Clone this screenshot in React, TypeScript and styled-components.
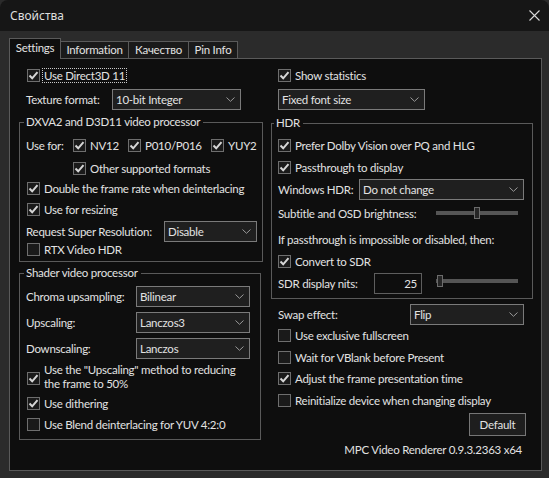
import React from "react";
import styled, { createGlobalStyle } from "styled-components";

const C = {
  text: "#e2e2e2",
  panel: "#0e0e0e",
  body: "#2b2b2b",
  title: "#161616",
  groupBorder: "#5a5a5a",
  ctrlBorder: "#7a7a7a",
  ctrlBg: "#1f1f1f",
};

const Global = createGlobalStyle`
  html, body { margin: 0; padding: 0; background: ${C.body}; overflow: hidden; }
  * { box-sizing: border-box; }
  body {
    font-family: Lato, "Noto Sans", sans-serif;
    font-size: 11.5px;
    letter-spacing: -0.25px;
    color: ${C.text};
  }
`;

const Window = styled.div`
  width: 549px;
  height: 478px;
  display: flex;
  flex-direction: column;
  background: ${C.body};
  border-radius: 8px 8px 0 0;
  overflow: hidden;
`;

const TitleBar = styled.div`
  height: 31px;
  flex: none;
  background: ${C.title};
  display: flex;
  align-items: center;
  justify-content: space-between;
  padding: 0 9px 0 10px;
`;

const TitleText = styled.span`
  font-family: "Noto Sans", sans-serif;
  font-size: 12px;
  letter-spacing: 0;
  color: #dedede;
`;

const Body = styled.div`
  flex: 1;
  display: flex;
  flex-direction: column;
  padding: 7px 8px 0 9px;
`;

const TabStrip = styled.div`
  display: flex;
  align-items: flex-start;
  height: 21px;
  margin-bottom: -1px;
  position: relative;
  z-index: 2;
`;

const Tab = styled.div<{ $w: number; $active?: boolean }>`
  width: ${(p) => p.$w}px;
  height: ${(p) => (p.$active ? 21 : 17)}px;
  margin-top: ${(p) => (p.$active ? 0 : 3)}px;
  margin-left: ${(p) => (p.$active ? 0 : -1)}px;
  border: 1px solid ${C.groupBorder};
  border-bottom: none;
  background: ${(p) => (p.$active ? C.panel : "#1a1a1a")};
  display: flex;
  align-items: center;
  justify-content: center;
  padding-bottom: ${(p) => (p.$active ? 2 : 0)}px;
  line-height: 14px;
  white-space: nowrap;
`;

const Panel = styled.div`
  position: relative;
  z-index: 1;
  width: 533px;
  height: 413px;
  border: 1px solid ${C.groupBorder};
  background: ${C.panel};
  padding: 10px 8px 0 9px;
  display: grid;
  grid-template-columns: 244px 262px;
  column-gap: 8px;
  align-items: start;
`;

const Column = styled.div`
  display: flex;
  flex-direction: column;
`;

const Group = styled.div<{ $w: number; $h: number; $mt: number }>`
  width: ${(p) => p.$w}px;
  height: ${(p) => p.$h}px;
  margin-top: ${(p) => p.$mt}px;
  border: 1px solid ${C.groupBorder};
  padding: 0 6px;
  display: flex;
  flex-direction: column;
`;

const GroupTitle = styled.span<{ $ml: number }>`
  align-self: flex-start;
  margin: -8px 0 0 ${(p) => p.$ml}px;
  padding: 0 3px 0 2px;
  line-height: 14px;
  height: 14px;
  background: ${C.panel};
  white-space: nowrap;
`;

const Row = styled.div<{ $mt?: number; $pl?: number; $h?: number }>`
  display: flex;
  align-items: center;
  margin-top: ${(p) => p.$mt ?? 0}px;
  padding-left: ${(p) => p.$pl ?? 0}px;
  height: ${(p) => p.$h ?? 13}px;
  white-space: nowrap;
`;

const Label = styled.span<{ $w?: number }>`
  ${(p) => (p.$w ? `width: ${p.$w}px; flex: none;` : "")}
  line-height: 13px;
  white-space: nowrap;
`;

const CheckWrap = styled.label<{ $mt?: number; $pl?: number; $w?: number; $top?: boolean }>`
  display: flex;
  align-items: ${(p) => (p.$top ? "flex-start" : "center")};
  gap: 4px;
  margin-top: ${(p) => p.$mt ?? 0}px;
  padding-left: ${(p) => p.$pl ?? 0}px;
  ${(p) => (p.$w ? `width: ${p.$w}px; flex: none;` : "")}
  min-height: 13px;
  white-space: nowrap;
`;

const Box = styled.span<{ $offset?: number }>`
  width: 13px;
  height: 13px;
  flex: none;
  border: 1px solid #6e6e6e;
  background: #1a1a1a;
  display: flex;
  align-items: center;
  justify-content: center;
  margin-top: ${(p) => p.$offset ?? 0}px;
`;

const CheckText = styled.span<{ $focus?: boolean; $lh?: number }>`
  line-height: ${(p) => p.$lh ?? 13}px;
  ${(p) => (p.$focus ? `outline: 1px dotted #c8c8c8; outline-offset: 0; padding: 0 1px; margin-left: -1px;` : "")}
`;

const SelectBox = styled.div<{ $w: number; $ml?: number }>`
  width: ${(p) => p.$w}px;
  height: 21px;
  flex: none;
  margin-left: ${(p) => p.$ml ?? 0}px;
  border: 1px solid ${C.ctrlBorder};
  background: ${C.ctrlBg};
  display: flex;
  align-items: center;
  justify-content: space-between;
  padding: 0 5px 0 3px;
  line-height: 14px;
`;

const Edit = styled.div<{ $w: number }>`
  width: ${(p) => p.$w}px;
  height: 21px;
  flex: none;
  border: 1px solid #5e5e5e;
  background: ${C.panel};
  display: flex;
  align-items: center;
  justify-content: flex-end;
  padding-right: 4px;
`;

const SliderWrap = styled.div<{ $w: number; $mt?: number }>`
  position: relative;
  width: ${(p) => p.$w}px;
  height: 12px;
  flex: none;
  align-self: flex-start;
  margin-top: ${(p) => p.$mt ?? 0}px;
`;

const Track = styled.div`
  margin-top: 4px;
  height: 4px;
  background: #555555;
`;

const Thumb = styled.div`
  position: absolute;
  top: 0;
  width: 6px;
  height: 12px;
  background: #262626;
  border: 1px solid #6c6c6c;
`;

const Spacer = styled.span<{ $w: number }>`
  width: ${(p) => p.$w}px;
  flex: none;
`;

const Button = styled.div`
  align-self: flex-end;
  margin: 6px 7px 0 0;
  width: 57px;
  height: 23px;
  border: 1px solid #767676;
  background: #1e1e1e;
  display: flex;
  align-items: center;
  justify-content: center;
`;

const Version = styled.div`
  margin-top: 7px;
  line-height: 13px;
  text-align: right;
  padding-right: 11px;
  white-space: nowrap;
`;

const Check = () => (
  <svg width="11" height="11" viewBox="0 0 11 11">
    <polyline points="1.5,5.5 4.2,8.3 9.5,2.2" fill="none" stroke="#d6d6d6" strokeWidth="2" />
  </svg>
);

const Chevron = () => (
  <svg width="9" height="5" viewBox="0 0 9 5">
    <polyline points="0.5,0.5 4.5,4.3 8.5,0.5" fill="none" stroke="#9a9a9a" strokeWidth="1" />
  </svg>
);

const CloseIcon = () => (
  <svg width="11" height="11" viewBox="0 0 11 11">
    <path d="M0.5 0.5 L10.5 10.5 M10.5 0.5 L0.5 10.5" stroke="#d8d8d8" strokeWidth="1.1" />
  </svg>
);

type CBProps = {
  label: React.ReactNode;
  checked?: boolean;
  mt?: number;
  pl?: number;
  w?: number;
  focus?: boolean;
  top?: boolean;
  boxOffset?: number;
  lh?: number;
};

const CheckBox = ({ label, checked, mt, pl, w, focus, top, boxOffset, lh }: CBProps) => (
  <CheckWrap $mt={mt} $pl={pl} $w={w} $top={top}>
    <Box $offset={boxOffset}>{checked && <Check />}</Box>
    <CheckText $focus={focus} $lh={lh}>{label}</CheckText>
  </CheckWrap>
);

const Select = ({ value, w, ml }: { value: string; w: number; ml?: number }) => (
  <SelectBox $w={w} $ml={ml}>
    <span>{value}</span>
    <Chevron />
  </SelectBox>
);

const Slider = ({ w, pos, mt }: { w: number; pos: number; mt?: number }) => (
  <SliderWrap $w={w} $mt={mt}>
    <Track />
    <Thumb style={{ left: pos }} />
  </SliderWrap>
);

export default function App() {
  return (
    <>
      <Global />
      <Window>
        <TitleBar>
          <TitleText>Свойства</TitleText>
          <CloseIcon />
        </TitleBar>
        <Body>
          <TabStrip>
            <Tab $w={52} $active>Settings</Tab>
            <Tab $w={69}>Information</Tab>
            <Tab $w={61}>Качество</Tab>
            <Tab $w={50}>Pin Info</Tab>
          </TabStrip>
          <Panel>
            <Column>
              <CheckBox label="Use Direct3D 11" checked pl={8} focus />
              <Row $mt={7} $pl={7} $h={21}>
                <Label $w={86}>Texture format:</Label>
                <Select value="10-bit Integer" w={129} />
              </Row>
              <Group $w={244} $h={140} $mt={12}>
                <GroupTitle $ml={-2}>DXVA2 and D3D11 video processor</GroupTitle>
                <Row $mt={10}>
                  <Label $w={47}>Use for:</Label>
                  <CheckBox label="NV12" checked w={55} />
                  <CheckBox label="P010/P016" checked w={83} />
                  <CheckBox label="YUY2" checked />
                </Row>
                <CheckBox label="Other supported formats" checked mt={10} pl={47} />
                <CheckBox label="Double the frame rate when deinterlacing" checked mt={7} pl={1} />
                <CheckBox label="Use for resizing" checked mt={8} pl={1} />
                <Row $mt={5} $h={21}>
                  <Label $w={138}>Request Super Resolution:</Label>
                  <Select value="Disable" w={93} />
                </Row>
                <CheckBox label="RTX Video HDR" mt={1} pl={1} />
              </Group>
              <Group $w={242} $h={167} $mt={11}>
                <GroupTitle $ml={-2}>Shader video processor</GroupTitle>
                <Row $mt={6} $h={21}>
                  <Label $w={110}>Chroma upsampling:</Label>
                  <Select value="Bilinear" w={114} />
                </Row>
                <Row $mt={5} $h={21}>
                  <Label $w={110}>Upscaling:</Label>
                  <Select value="Lanczos3" w={114} />
                </Row>
                <Row $mt={5} $h={21}>
                  <Label $w={110}>Downscaling:</Label>
                  <Select value="Lanczos" w={114} />
                </Row>
                <CheckBox
                  label={
                    <>
                      Use the "Upscaling" method to reducing
                      <br />
                      the frame to 50%
                    </>
                  }
                  checked
                  mt={4}
                  pl={1}
                  top
                  boxOffset={9}
                  lh={14}
                />
                <CheckBox label="Use dithering" checked mt={6} pl={1} />
                <CheckBox label="Use Blend deinterlacing for YUV 4:2:0" mt={8} pl={1} />
              </Group>
            </Column>
            <Column>
              <CheckBox label="Show statistics" checked pl={7} />
              <Row $mt={7} $pl={7} $h={21}>
                <Select value="Fixed font size" w={147} />
              </Row>
              <Group $w={262} $h={176} $mt={13}>
                <GroupTitle $ml={-4}>HDR</GroupTitle>
                <CheckBox label="Prefer Dolby Vision over PQ and HLG" checked mt={9} />
                <CheckBox label="Passthrough to display" checked mt={9} />
                <Row $mt={5} $h={21}>
                  <Label $w={81}>Windows HDR:</Label>
                  <Select value="Do not change" w={165} />
                </Row>
                <Row $mt={7} $h={12}>
                  <Label $w={158}>Subtitle and OSD brightness:</Label>
                  <Slider w={82} pos={38} />
                </Row>
                <Row $mt={14}>
                  <Label>If passthrough is impossible or disabled, then:</Label>
                </Row>
                <CheckBox label="Convert to SDR" checked mt={9} />
                <Row $mt={5} $h={21}>
                  <Label $w={96}>SDR display nits:</Label>
                  <Edit $w={48}>25</Edit>
                  <Spacer $w={14} />
                  <Slider w={82} pos={1} mt={2} />
                </Row>
              </Group>
              <Row $mt={5} $pl={7} $h={21}>
                <Label $w={132}>Swap effect:</Label>
                <Select value="Flip" w={114} />
              </Row>
              <CheckBox label="Use exclusive fullscreen" mt={4} pl={7} />
              <CheckBox label="Wait for VBlank before Present" mt={9} pl={7} />
              <CheckBox label="Adjust the frame presentation time" checked mt={8} pl={7} />
              <CheckBox label="Reinitialize device when changing display" mt={9} pl={7} />
              <Button>Default</Button>
              <Version>MPC Video Renderer 0.9.3.2363 x64</Version>
            </Column>
          </Panel>
        </Body>
      </Window>
    </>
  );
}
